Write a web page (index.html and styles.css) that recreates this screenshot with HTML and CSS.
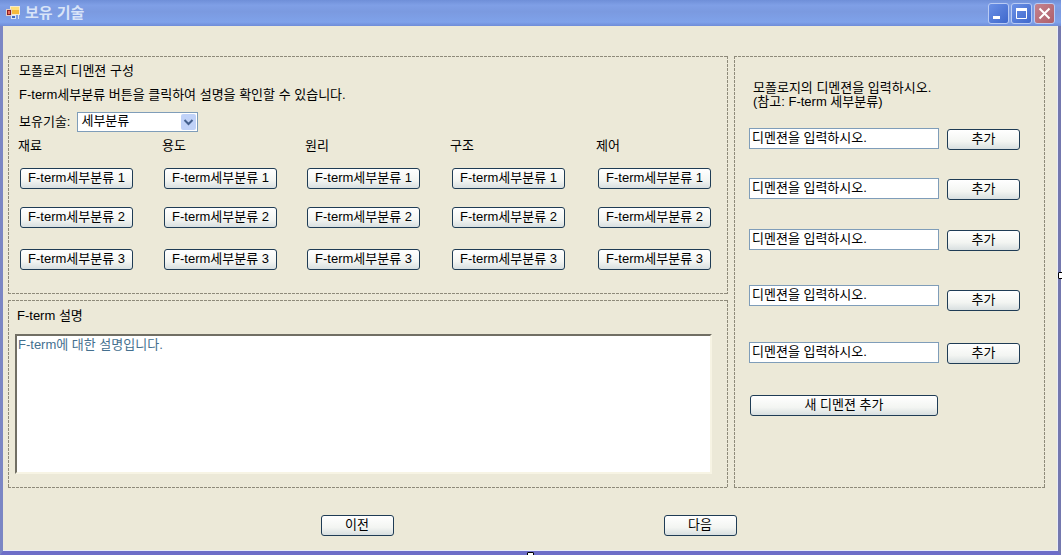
FILE: index.html
```html
<!DOCTYPE html>
<html lang="ko">
<head>
<meta charset="utf-8">
<title>보유 기술</title>
<link rel="stylesheet" href="styles.css">
</head>
<body>
<div class="window">
  <header class="titlebar">
    <svg class="app-icon" width="16" height="16" viewBox="0 0 16 16" aria-hidden="true">
      <rect x="5.500" y="1.500" width="9" height="8" fill="#f5b93c" stroke="#f3ead0"/>
      <rect x="6" y="2" width="8" height="3" fill="#ffe07a"/>
      <rect x="1.500" y="4.500" width="5" height="6" fill="#8c1f24" stroke="#e3cfc4"/>
      <rect x="3" y="6" width="2" height="3" fill="#e8695a"/>
      <rect x="6.500" y="10.500" width="4" height="3" fill="#3e68c0" stroke="#dce4f4"/>
      <path d="M13.500 10v4" stroke="#dce4f4"/>
    </svg>
    <h1 class="title">보유 기술</h1>
    <div class="caption-buttons">
      <button class="caption" type="button" aria-label="최소화"><svg width="19" height="19" viewBox="0 0 19 19"><path d="M4 13.500h7" stroke="#fff" stroke-width="3"/></svg></button>
      <button class="caption" type="button" aria-label="최대화"><svg width="19" height="19" viewBox="0 0 19 19"><path d="M4.500 5v9.500h10V5" fill="none" stroke="#fff"/><path d="M4 5.500h11" stroke="#fff" stroke-width="3"/></svg></button>
      <button class="caption close" type="button" aria-label="닫기"><svg width="19" height="19" viewBox="0 0 19 19"><path d="M4.500 4.500l10 10m0-10l-10 10" stroke="#fff" stroke-width="2"/></svg></button>
    </div>
  </header>
  <main class="client">
    <div class="panels">
      <section class="panel compose">
        <h2 class="line">모폴로지 디멘젼 구성</h2>
        <p class="line hint">F-term세부분류 버튼을 클릭하여 설명을 확인할 수 있습니다.</p>
        <div class="picker">
          <label for="tech">보유기술:</label>
          <div class="combo">
            <select id="tech"><option>세부분류</option></select>
            <svg class="combo-arrow" width="15" height="16" viewBox="0 0 15 16" aria-hidden="true"><rect width="15" height="16" rx="2" fill="#c0d2f8"/><path d="M3.500 6l4 4 4-4" fill="none" stroke="#44608e" stroke-width="2"/></svg>
          </div>
        </div>
        <div class="terms">
          <h3>재료</h3><h3>용도</h3><h3>원리</h3><h3>구조</h3><h3>제어</h3>
          <button class="btn" type="button">F-term세부분류 1</button><button class="btn" type="button">F-term세부분류 1</button><button class="btn" type="button">F-term세부분류 1</button><button class="btn" type="button">F-term세부분류 1</button><button class="btn" type="button">F-term세부분류 1</button>
          <button class="btn" type="button">F-term세부분류 2</button><button class="btn" type="button">F-term세부분류 2</button><button class="btn" type="button">F-term세부분류 2</button><button class="btn" type="button">F-term세부분류 2</button><button class="btn" type="button">F-term세부분류 2</button>
          <button class="btn" type="button">F-term세부분류 3</button><button class="btn" type="button">F-term세부분류 3</button><button class="btn" type="button">F-term세부분류 3</button><button class="btn" type="button">F-term세부분류 3</button><button class="btn" type="button">F-term세부분류 3</button>
        </div>
      </section>
      <section class="panel describe">
        <label class="line" for="description">F-term 설명</label>
        <textarea id="description" class="description">F-term에 대한 설명입니다.</textarea>
      </section>
      <section class="panel entry">
        <p class="guide">모폴로지의 디멘젼을 입력하시오.<br>(참고: F-term 세부분류)</p>
        <div class="rows">
          <div class="row"><input class="field" type="text" aria-label="디멘젼 1" value="디멘젼을 입력하시오."><button class="btn" type="button">추가</button></div>
          <div class="row"><input class="field" type="text" aria-label="디멘젼 2" value="디멘젼을 입력하시오."><button class="btn" type="button">추가</button></div>
          <div class="row"><input class="field" type="text" aria-label="디멘젼 3" value="디멘젼을 입력하시오."><button class="btn" type="button">추가</button></div>
          <div class="row"><input class="field" type="text" aria-label="디멘젼 4" value="디멘젼을 입력하시오."><button class="btn" type="button">추가</button></div>
          <div class="row"><input class="field" type="text" aria-label="디멘젼 5" value="디멘젼을 입력하시오."><button class="btn" type="button">추가</button></div>
          <div class="row"><button class="btn add-new" type="button">새 디멘젼 추가</button></div>
        </div>
      </section>
    </div>
    <nav class="steps">
      <button class="btn step" type="button">이전</button>
      <button class="btn step" type="button">다음</button>
    </nav>
  </main>
  <span class="handle handle-right"></span>
  <span class="handle handle-bottom"></span>
</div>
</body>
</html>
```
FILE: styles.css
```css
* {
  box-sizing: border-box;
}

body {
  margin: 0;
  padding: 0 1px 1px 0;
  min-height: 100vh;
  display: flex;
  overflow: hidden;
  background: #fff;
  color: #000;
  font: 13px/16px "Liberation Sans", "Noto Sans CJK KR", sans-serif;
}

h1, h2, h3, p {
  margin: 0;
  font-size: inherit;
  font-weight: inherit;
}

button, input, select, textarea {
  margin: 0;
  font: inherit;
  color: inherit;
}

.window {
  position: relative;
  flex: 1;
  display: flex;
  flex-direction: column;
  border: solid #7b86c4;
  border-width: 0 3px 4px 3px;
  border-right-color: #7478ae;
  border-bottom-color: #6d6dc8;
}

.titlebar {
  display: flex;
  align-items: center;
  gap: 4px;
  height: 26px;
  margin: 0 -3px;
  padding: 0 6px 0 5px;
  background: linear-gradient(#6f8fd8, #7f9fe6 20%, #7b9ae0 45%, #7fa2ea 85%, #6f8cd8);
}

.title {
  flex: 1;
  color: #d8e4f8;
  font-size: 15px;
  font-weight: bold;
  line-height: 20px;
}

.caption-buttons {
  display: flex;
  gap: 2px;
}

.caption {
  width: 21px;
  height: 21px;
  padding: 0;
  border: 1px solid #b9cbf4;
  border-radius: 3px;
  background: linear-gradient(135deg, #6a90e6, #3f68cc);
}

.caption.close {
  background: linear-gradient(135deg, #c5838f, #ae5f6a);
}

.caption svg {
  display: block;
}

.client {
  flex: 1;
  padding: 30px 12px 14px 5px;
  border: solid #e9ecf8;
  border-width: 0 1px 1px 0;
  background: #ece9d8;
}

.panels {
  display: grid;
  grid-template-columns: 720fr 311fr;
  grid-template-rows: 238px 188px;
  gap: 6px;
}

.panel {
  --dash: #8e8a7a;
  background:
    repeating-linear-gradient(90deg, var(--dash) 0 3px, transparent 3px 4px) top / 100% 1px no-repeat,
    repeating-linear-gradient(90deg, var(--dash) 0 3px, transparent 3px 4px) bottom / 100% 1px no-repeat,
    repeating-linear-gradient(var(--dash) 0 3px, transparent 3px 4px) left / 1px 100% no-repeat,
    repeating-linear-gradient(var(--dash) 0 3px, transparent 3px 4px) right / 1px 100% no-repeat;
}

.compose {
  padding: 7px 17px 0 11px;
}

.hint {
  margin-top: 8px;
}

.picker {
  display: flex;
  align-items: center;
  gap: 7px;
  margin-top: 9px;
}

.combo {
  position: relative;
  width: 121px;
}

.combo select {
  display: block;
  width: 100%;
  height: 20px;
  padding: 0 20px 2px 3px;
  border: 1px solid #7f9db9;
  border-radius: 0;
  background: #fff;
  line-height: 16px;
  appearance: none;
}

.combo-arrow {
  position: absolute;
  top: 2px;
  right: 2px;
  pointer-events: none;
}

.terms {
  display: grid;
  grid-template-columns: 144fr 143fr 145fr 146fr 113px;
  grid-template-rows: 16px 21px 21px 21px;
  row-gap: 18px;
  margin: 6px 0 0 1px;
}

.terms h3 {
  margin-left: -2px;
}

.terms .btn {
  width: 113px;
}

.terms .btn:nth-child(n+6) {
  margin-top: -4px;
  margin-bottom: 4px;
}

.terms .btn:nth-child(n+16) {
  margin-top: -1px;
  margin-bottom: 1px;
}

.btn {
  height: 21px;
  padding: 0 0 2px;
  border: 1px solid #1f3c55;
  border-radius: 3px;
  background: linear-gradient(#fff, #f3f5f2 60%, #d8dfe0);
  line-height: 16px;
  text-align: center;
  white-space: nowrap;
}

.describe {
  grid-column: 1;
  display: flex;
  flex-direction: column;
  gap: 10px;
  padding: 8px 16px 14px 7px;
}

.describe .line {
  padding-left: 2px;
}

.description {
  flex: 1;
  width: 100%;
  padding: 1px;
  border: solid;
  border-width: 2px;
  border-color: #716f64 #f7f4e4 #f7f4e4 #716f64;
  background: #fff;
  color: #44708f;
  line-height: 16px;
  resize: none;
}

.entry {
  grid-column: 2;
  grid-row: 1 / span 2;
  padding: 25px 25px 0 15px;
}

.guide {
  padding-left: 4px;
  line-height: 14px;
}

.rows {
  display: grid;
  grid-template-rows: 50px 51px 56px 57px 53px 21px;
  margin-top: 19px;
}

.row {
  display: flex;
  align-items: flex-start;
  gap: 8px;
}

.row .btn {
  width: 73px;
  margin-top: 1px;
}

.row:nth-child(4) .btn {
  margin-top: 5px;
}

.row .add-new {
  flex: 1;
  margin: 0 82px 0 1px;
}

.field {
  flex: 1;
  min-width: 0;
  height: 21px;
  padding: 0 2px 5px;
  border: 1px solid #7f9db9;
  background: #fff;
  line-height: 14px;
}

.steps {
  display: flex;
  justify-content: center;
  gap: 270px;
  margin-top: 27px;
  padding-left: 4px;
}

.step {
  width: 73px;
}

.handle {
  position: absolute;
  width: 7px;
  height: 7px;
  border: 1px solid #000;
  border-radius: 1px;
  background: #fff;
}

.handle-right {
  top: 272px;
  right: -7px;
}

.handle-bottom {
  left: 524px;
  bottom: -8px;
}
```
